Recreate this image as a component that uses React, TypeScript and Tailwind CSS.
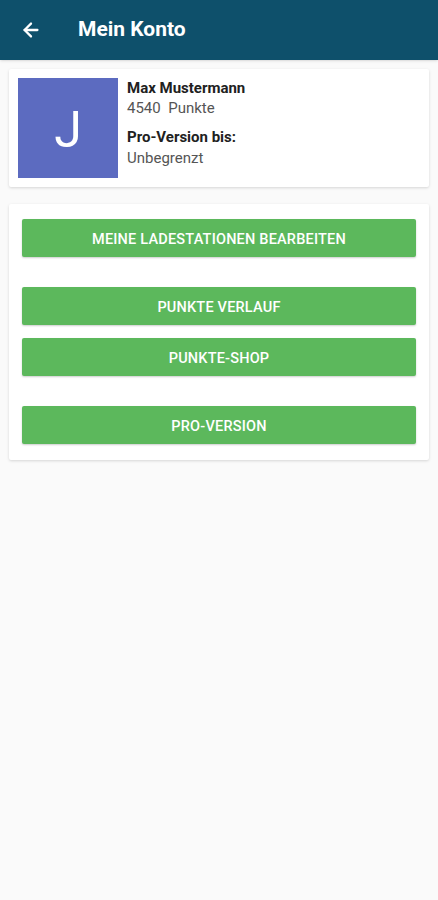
import { ArrowLeft } from 'lucide-react';

const buttons = [
  { label: 'MEINE LADESTATIONEN BEARBEITEN', gap: 'mt-0' },
  { label: 'PUNKTE VERLAUF', gap: 'mt-[30px]' },
  { label: 'PUNKTE-SHOP', gap: 'mt-[13px]' },
  { label: 'PRO-VERSION', gap: 'mt-[30px]' },
];

export default function App() {
  return (
    <div className="min-h-[900px] bg-[#fafafa] font-['Roboto',sans-serif]">
      <header className="h-[60px] bg-[#0e506b] flex items-center pl-[20px] shadow-sm">
        <ArrowLeft size={22} strokeWidth={2.5} className="text-white" />
        <h1 className="ml-[36px] text-white text-[21px] font-bold">Mein Konto</h1>
      </header>

      <div className="mx-[9px] mt-[9px] bg-white rounded-[2px] shadow-[0_1px_3px_rgba(0,0,0,0.15)] p-[9px] flex">
        <div className="w-[100px] h-[100px] bg-[#5c6bc0] flex items-center justify-center pt-[4px]">
          <span className="text-white text-[50px] font-normal leading-none">J</span>
        </div>
        <div className="ml-[9px] text-[15px] text-[#212121] leading-[20px]">
          <div className="font-bold">Max Mustermann</div>
          <div className="text-[#555]">4540&nbsp;&nbsp;Punkte</div>
          <div className="font-bold mt-[9px]">Pro-Version bis:</div>
          <div className="text-[#555] mt-[1px]">Unbegrenzt</div>
        </div>
      </div>

      <div className="mx-[9px] mt-[17px] bg-white rounded-[2px] shadow-[0_1px_3px_rgba(0,0,0,0.15)] pt-[15px] pb-[16px] px-[13px]">
        {buttons.map((b) => (
          <button
            key={b.label}
            className={`${b.gap} w-full h-[38px] pt-[3px] bg-[#5cb85c] text-white text-[14.5px] font-medium tracking-[0.2px] rounded-[2px] shadow-[0_1px_2px_rgba(0,0,0,0.2)] flex items-center justify-center`}
          >
            {b.label}
          </button>
        ))}
      </div>
    </div>
  );
}
